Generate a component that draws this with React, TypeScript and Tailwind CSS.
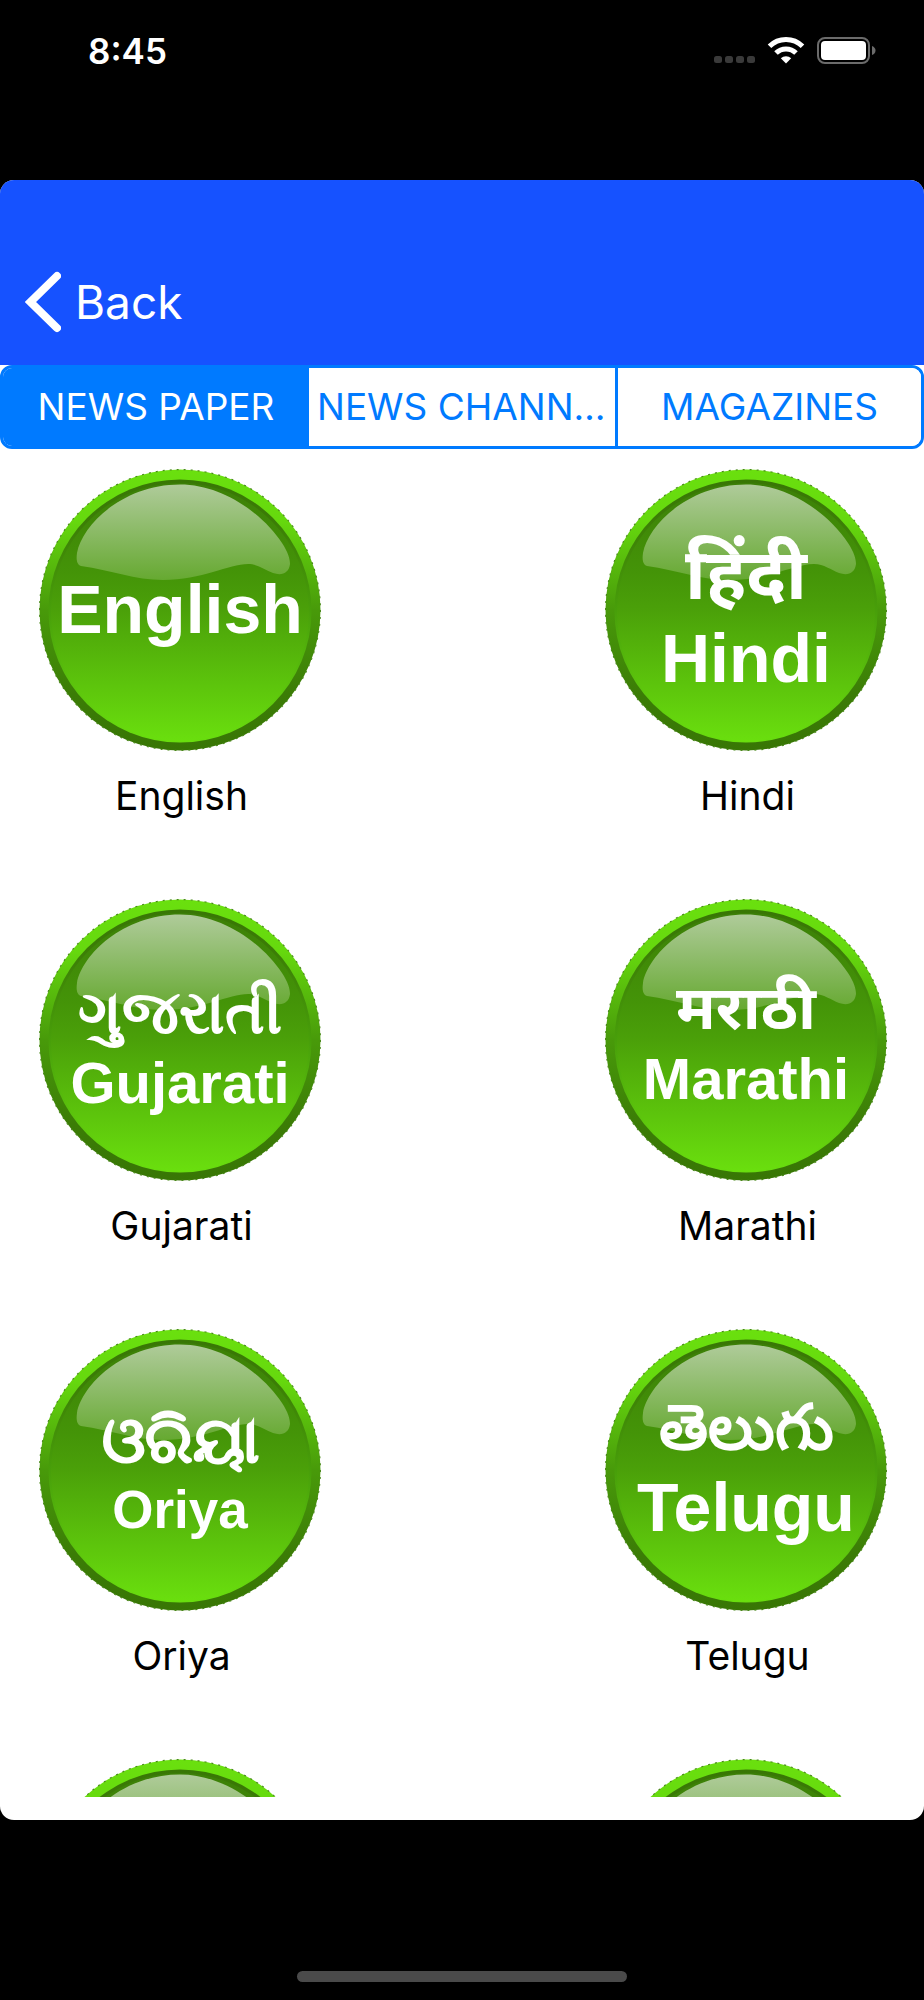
import React, { useState } from "react";

type Language = {
  id: string;
  label?: string;
  native?: string;
  nativeSize?: number;
  nativeY?: number;
  nativeStroke?: number;
  nativeBold?: boolean;
  size?: number;
  y?: number;
};

const languages: Language[] = [
  { id: "en", label: "English", size: 68, y: 164 },
  { id: "hi", label: "Hindi", native: "हिंदी", nativeSize: 71, nativeY: 130, nativeStroke: 0, nativeBold: true, size: 68, y: 213 },
  { id: "gu", label: "Gujarati", native: "ગુજરાતી", nativeSize: 60, nativeY: 134, nativeStroke: 2, size: 58, y: 204 },
  { id: "mr", label: "Marathi", native: "मराठी", nativeSize: 61, nativeY: 130, nativeStroke: 0, nativeBold: true, size: 58, y: 200 },
  { id: "or", label: "Oriya", native: "ଓରିୟା", nativeSize: 63, nativeY: 133, nativeStroke: 3, size: 53, y: 199 },
  { id: "te", label: "Telugu", native: "తెలుగు", nativeSize: 63, nativeY: 120, nativeStroke: 0, nativeBold: true, size: 68, y: 202 },
  { id: "next-left" },
  { id: "next-right" },
];

const tabs = ["NEWS PAPER", "NEWS CHANNELS", "MAGAZINES"];

function Gradients() {
  return (
    <svg className="absolute size-0" aria-hidden="true">
      <defs>
        <linearGradient id="rim" x1="0" y1="0" x2="0" y2="1">
          <stop offset="0" stopColor="#6ae00e" />
          <stop offset="0.18" stopColor="#66d90e" />
          <stop offset="0.5" stopColor="#489a0a" />
          <stop offset="0.8" stopColor="#3b7c06" />
          <stop offset="1" stopColor="#387605" />
        </linearGradient>
        <linearGradient id="edge" x1="0" y1="0" x2="0" y2="1">
          <stop offset="0" stopColor="#387605" />
          <stop offset="0.15" stopColor="#3b7c06" />
          <stop offset="0.5" stopColor="#489f0a" />
          <stop offset="1" stopColor="#69de0e" />
        </linearGradient>
        <linearGradient id="body" x1="0" y1="0" x2="0" y2="1">
          <stop offset="0" stopColor="#3c7f07" />
          <stop offset="0.35" stopColor="#449408" />
          <stop offset="0.48" stopColor="#4a9f09" />
          <stop offset="1" stopColor="#6adf0e" />
        </linearGradient>
        <linearGradient id="gloss" x1="0" y1="0" x2="0" y2="1">
          <stop offset="0" stopColor="#afcb9a" />
          <stop offset="1" stopColor="#66a931" />
        </linearGradient>
      </defs>
    </svg>
  );
}

function Badge({ lang }: { lang: Language }) {
  return (
    <svg viewBox="0 0 282 282" className="block size-[282px]" aria-hidden="true">
      <circle cx="141" cy="141" r="140.5" fill="url(#rim)" />
      <circle cx="141" cy="141" r="140.4" fill="none" stroke="#4b8a1c" strokeWidth="1.2" strokeDasharray="2 5" />
      <circle cx="141" cy="142" r="131.5" fill="url(#edge)" />
      <circle cx="141" cy="143" r="129" fill="url(#body)" />
      <path
        d="M141 15.500C184 15.500 224 45 243 74C249 83 251 90 251 95C250 104 243 107 234 104C226 101 219 95 209 95C190 95 163 111 124 111C96 111 72 101 42 97C38 96 37 91 38 84C43 56 84 15.500 141 15.500Z"
        fill="url(#gloss)"
      />
      <g fill="#fff" stroke="#fff" textAnchor="middle">
        {lang.native && (
          <text
            x="141"
            y={lang.nativeY}
            fontSize={lang.nativeSize}
            strokeWidth={lang.nativeStroke}
            fontWeight={lang.nativeBold ? 700 : 400}
            className="font-['Noto_Sans','Liberation_Sans',sans-serif]"
          >
            {lang.native}
          </text>
        )}
        {lang.label && (
          <text
            x="141"
            y={lang.y}
            fontSize={lang.size}
            fontWeight="700"
            strokeWidth="0"
            className="font-['Liberation_Sans',sans-serif]"
          >
            {lang.label}
          </text>
        )}
      </g>
    </svg>
  );
}

function StatusBar() {
  return (
    <div className="flex h-[180px] items-start justify-between pt-[28px] pr-[48px] pl-[88px]">
      <span className="text-[35px] leading-[46px] font-semibold text-white">8:45</span>
      <svg viewBox="0 0 162 28" className="mt-[8px] h-[28px] w-[162px]" aria-hidden="true">
        <g fill="#3a3a3a">
          <rect x="0" y="20" width="8" height="7" rx="2.500" />
          <rect x="11" y="20" width="8" height="7" rx="2.500" />
          <rect x="22" y="20" width="8" height="7" rx="2.500" />
          <rect x="33" y="20" width="8" height="7" rx="2.500" />
        </g>
        <g fill="none" stroke="#fff" strokeWidth="5">
          <path d="M55.500 10.300A23.500 23.500 0 0 1 88.500 10.300" />
          <path d="M62 17A14.200 14.200 0 0 1 82 17" />
        </g>
        <path d="M72 27.500L66.800 22.200A7.600 7.600 0 0 1 77.200 22.200Z" fill="#fff" />
        <rect x="104" y="2" width="51" height="25" rx="7" fill="none" stroke="#6b6b6b" strokeWidth="2" />
        <rect x="107" y="5" width="45" height="19" rx="4" fill="#fff" />
        <path d="M158 10V19Q161.500 17.500 161.500 14.500Q161.500 11.500 158 10Z" fill="#6b6b6b" />
      </svg>
    </div>
  );
}

export default function App() {
  const [active, setActive] = useState(0);
  return (
    <div className="flex min-h-screen flex-col bg-black font-['Inter','Liberation_Sans',sans-serif]">
      <Gradients />
      <StatusBar />
      <main className="overflow-hidden rounded-[14px] bg-white pb-[23px]">
        <header className="bg-[#1652ff] px-[25px] pt-[90px] pb-[31px]">
          <button type="button" className="flex h-[64px] items-center gap-[14px] text-white">
            <svg viewBox="0 0 36 62" className="h-[62px] w-[36px]" aria-hidden="true">
              <path
                d="M32 5L5.500 31L32 57"
                fill="none"
                stroke="#fff"
                strokeWidth="8"
                strokeLinecap="round"
                strokeLinejoin="miter"
              />
            </svg>
            <span className="text-[46px] leading-[56px]">Back</span>
          </button>
        </header>

        <div role="tablist" className="grid h-[84px] grid-cols-3 overflow-hidden rounded-[12px] border-[3px] border-[#007aff]">
          {tabs.map((tab, i) => (
            <button
              key={tab}
              type="button"
              role="tab"
              aria-selected={i === active}
              onClick={() => setActive(i)}
              className={
                "min-w-0 truncate px-[8px] text-[37px] leading-[44px] " +
                (i > 1 ? "border-l-[3px] border-[#007aff] " : "") +
                (i === active ? "bg-[#007aff] text-white" : "bg-white text-[#007aff]")
              }
            >
              {tab}
            </button>
          ))}
        </div>

        <div className="h-[1348px] overflow-hidden pt-[20px] pr-[37px] pl-[39px]">
          <ul className="flex flex-wrap justify-between gap-x-[120px]">
            {languages.map((lang) => (
              <li key={lang.id} className="h-[430px]">
                <a href={"#" + lang.id} className="flex flex-col items-center gap-[22px]">
                  <Badge lang={lang} />
                  {lang.label && <span className="pl-[3px] text-[39px] leading-[46px] text-black">{lang.label}</span>}
                </a>
              </li>
            ))}
          </ul>
        </div>
      </main>
      <footer className="flex flex-1 items-end justify-center pt-[60px] pb-[18px]">
        <div className="h-[11px] w-[330px] rounded-full bg-[#4a4a4a]" />
      </footer>
    </div>
  );
}
